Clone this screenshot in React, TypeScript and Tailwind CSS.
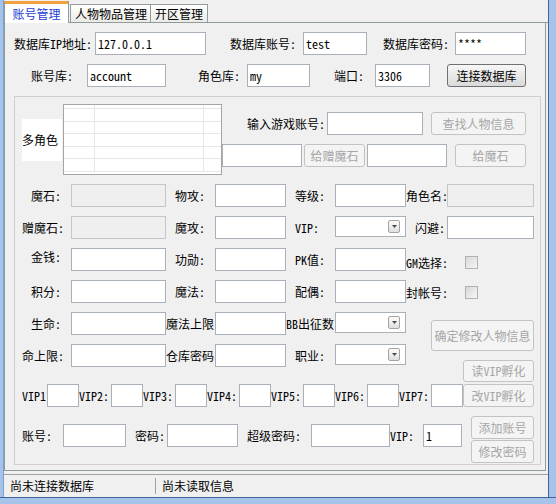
import React from 'react';

type FieldProps = { w: string; value?: string; gray?: boolean; className?: string };

// plain textbox, gray when disabled
const Field: React.FC<FieldProps> = ({ w, value = '', gray = false, className = '' }) => (
  <div
    className={`${w} h-[23px] shrink-0 flex items-center px-[2px] border ${
      gray ? 'border-[#c6c6c6] bg-[#efefef]' : 'border-[#a9b0b8] bg-white'
    } ${className}`}
  >
    {value}
  </div>
);

type LabelProps = { w: string; className?: string; children: React.ReactNode };

const Label: React.FC<LabelProps> = ({ w, className = '', children }) => (
  <div className={`${w} h-[23px] shrink-0 flex items-center whitespace-nowrap ${className}`}>{children}</div>
);

type BtnProps = { w: string; h?: string; disabled?: boolean; className?: string; children: React.ReactNode };

const Btn: React.FC<BtnProps> = ({ w, h = 'h-[23px]', disabled = true, className = '', children }) => (
  <div
    className={`${w} ${h} shrink-0 flex items-center justify-center rounded-[3px] border whitespace-nowrap ${
      disabled
        ? 'border-[#c3c3c3] bg-[#f4f4f4] text-[#a6a6a6]'
        : 'border-[#707070] bg-linear-to-b from-[#f7f7f7] to-[#dadada] text-black'
    } ${className}`}
  >
    {children}
  </div>
);

const Select: React.FC<{ w: string }> = ({ w }) => (
  <div className={`${w} h-[21px] self-start flex items-center justify-end pr-[5px] border border-[#a9b0b8] bg-white`}>
    <div className="w-[12px] h-[13px] rounded-[2px] border border-[#a3a3a3] bg-linear-to-b from-[#fbfbfb] to-[#dfdfdf] flex items-center justify-center">
      <svg width="5" height="3" viewBox="0 0 5 3">
        <path d="M0 0h5L2.5 3z" fill="#4d4d4d" />
      </svg>
    </div>
  </div>
);

const Check = () => (
  <div className="w-[13px] h-[13px] shrink-0 border border-[#b1b1b1] bg-linear-to-br from-[#d8d8d8] to-[#f6f6f6]" />
);

const App: React.FC = () => {
  const vipRow = ['VIP2:', 'VIP3:', 'VIP4:', 'VIP5:', 'VIP6:', 'VIP7:'];

  return (
    <div className="w-[556px] h-[504px] flex flex-col bg-[#f0f0f0] text-[12px] leading-none text-black font-['Noto_Sans_Mono_CJK_SC','Noto_Sans_CJK_SC',sans-serif] overflow-hidden">
      <div className="flex flex-1 min-h-0">
        {/* left window frame */}
        <div className="w-[4px] bg-[#a6c4ea] border-r border-[#7d9fcf]" />

        <div className="flex-1 flex flex-col min-w-0">
          {/* tab strip */}
          <div className="h-[23px] flex items-end">
            <div className="w-[65px] h-[22px] flex flex-col bg-white border-l border-r border-[#919b9c]">
              <div className="h-[3px] bg-[#f0a33c]" />
              <div className="flex-1 flex items-center justify-center text-[#1c3ed3]">账号管理</div>
            </div>
            <div className="w-[1px] h-full border-b border-[#919b9c]" />
            <div className="w-[81px] h-[19px] flex items-center pl-[4px] border border-[#919b9c] bg-linear-to-b from-white to-[#ebebe6]">
              人物物品管理
            </div>
            <div className="w-[57px] h-[19px] flex items-center justify-center border border-l-0 border-[#919b9c] bg-linear-to-b from-white to-[#ebebe6]">
              开区管理
            </div>
            <div className="flex-1 h-full border-b border-[#919b9c]" />
          </div>

          {/* tab page */}
          <div className="h-[448px] mr-[2px] border border-t-0 border-[#919b9c] bg-[#f0f0f0] flex flex-col">
            {/* connection row 1 */}
            <div className="flex mt-[9px]">
              <Label w="w-[81px]" className="ml-[9px]">数据库IP地址:</Label>
              <Field w="w-[111px]" value="127.0.0.1" />
              <Label w="w-[73px]" className="ml-[24px]">数据库账号:</Label>
              <Field w="w-[64px]" value="test" />
              <Label w="w-[72px]" className="ml-[16px]">数据库密码:</Label>
              <Field w="w-[71px]" value="****" />
            </div>

            {/* connection row 2 */}
            <div className="flex mt-[9px]">
              <Label w="w-[56px]" className="ml-[26px]">账号库:</Label>
              <Field w="w-[79px]" value="account" />
              <Label w="w-[49px]" className="ml-[32px]">角色库:</Label>
              <Field w="w-[63px]" value="my" />
              <Label w="w-[41px]" className="ml-[24px]">端口:</Label>
              <Field w="w-[55px]" value="3306" />
              <Btn w="w-[79px]" disabled={false} className="ml-[17px]">连接数据库</Btn>
            </div>

            {/* group box */}
            <div className="mt-[9px] ml-[9px] w-[527px] h-[369px] border border-[#cfcfcf] flex flex-col">
              {/* role list + search */}
              <div className="flex mt-[7px] items-start">
                <div className="ml-[7px] mt-[15px] w-[40px] h-[42px] bg-white flex items-center">多角色</div>
                <div className="ml-[1px] w-[159px] h-[71px] border border-[#a5a5a5] bg-white flex flex-col overflow-hidden">
                  <div className="h-[4px] shrink-0 grid grid-cols-[31px_109px_1fr] border-b border-[#e6e6e6]">
                    <div className="border-r border-[#e6e6e6]" />
                    <div className="border-r border-[#e6e6e6]" />
                    <div />
                  </div>
                  {[0, 1, 2, 3, 4].map((r) => (
                    <div key={r} className="h-[12.5px] shrink-0 grid grid-cols-[31px_109px_1fr] border-b border-[#e6e6e6]">
                      <div className="border-r border-[#e6e6e6]" />
                      <div className="border-r border-[#e6e6e6]" />
                      <div />
                    </div>
                  ))}
                </div>
                <div className="flex flex-col">
                  <div className="flex mt-[8px]">
                    <Label w="w-[80px]" className="ml-[25px]">输入游戏账号:</Label>
                    <Field w="w-[96px]" />
                    <Btn w="w-[95px]" className="ml-[8px]">查找人物信息</Btn>
                  </div>
                  <div className="flex mt-[9px]">
                    <Field w="w-[80px]" />
                    <Btn w="w-[61px]" className="ml-[2px]">给赠魔石</Btn>
                    <Field w="w-[80px]" className="ml-[2px]" />
                    <Btn w="w-[71px]" className="ml-[8px]">给魔石</Btn>
                  </div>
                </div>
              </div>

              {/* character stats */}
              <div className="flex items-start mt-[9px]">
                <div className="grid grid-cols-[56px_95px_49px_71px_49px_71px] gap-y-[9px]">
                  <Label w="w-[56px]" className="pl-[16px]">魔石:</Label>
                  <Field w="w-[95px]" gray />
                  <Label w="w-[49px]" className="pl-[9px]">物攻:</Label>
                  <Field w="w-[71px]" />
                  <Label w="w-[49px]" className="pl-[9px]">等级:</Label>
                  <Field w="w-[71px]" />

                  <Label w="w-[56px]" className="pl-[7px]">赠魔石:</Label>
                  <Field w="w-[95px]" gray />
                  <Label w="w-[49px]" className="pl-[9px]">魔攻:</Label>
                  <Field w="w-[71px]" />
                  <Label w="w-[49px]" className="pl-[9px]">VIP:</Label>
                  <Select w="w-[71px]" />

                  <Label w="w-[56px]" className="pl-[16px] pb-[5px]">金钱:</Label>
                  <Field w="w-[95px]" />
                  <Label w="w-[49px]" className="pl-[9px]">功勋:</Label>
                  <Field w="w-[71px]" />
                  <Label w="w-[49px]" className="pl-[9px]">PK值:</Label>
                  <Field w="w-[71px]" />

                  <Label w="w-[56px]" className="pl-[16px]">积分:</Label>
                  <Field w="w-[95px]" />
                  <Label w="w-[49px]" className="pl-[9px]">魔法:</Label>
                  <Field w="w-[71px]" />
                  <Label w="w-[49px]" className="pl-[9px]">配偶:</Label>
                  <Field w="w-[71px]" />

                  <Label w="w-[56px]" className="pl-[16px]">生命:</Label>
                  <Field w="w-[95px]" />
                  <Label w="w-[49px]">魔法上限</Label>
                  <Field w="w-[71px]" />
                  <Label w="w-[49px]">BB出征数</Label>
                  <Select w="w-[71px]" />

                  <Label w="w-[56px]" className="pl-[7px]">命上限:</Label>
                  <Field w="w-[95px]" />
                  <Label w="w-[49px]">仓库密码</Label>
                  <Field w="w-[71px]" />
                  <Label w="w-[49px]" className="pl-[9px]">职业:</Label>
                  <Select w="w-[71px]" />
                </div>

                <div className="w-[128px] flex flex-col">
                  <div className="flex">
                    <Label w="w-[41px]">角色名:</Label>
                    <Field w="w-[87px]" gray />
                  </div>
                  <div className="flex mt-[9px]">
                    <Label w="w-[41px]" className="pl-[9px]">闪避:</Label>
                    <Field w="w-[87px]" />
                  </div>
                  <div className="flex mt-[9px] h-[23px] items-end pb-[2px]">
                    <div className="w-[59px] whitespace-nowrap">GM选择:</div>
                    <Check />
                  </div>
                  <div className="flex mt-[9px] h-[23px] items-center pt-[2px]">
                    <div className="w-[59px] whitespace-nowrap">封帐号:</div>
                    <Check />
                  </div>
                  <Btn w="w-[103px]" h="h-[31px]" className="ml-[25px] mt-[17px]">确定修改人物信息</Btn>
                  <Btn w="w-[71px]" h="h-[22px]" className="ml-[57px] mt-[9px]">读VIP孵化</Btn>
                </div>
              </div>

              {/* vip incubation row */}
              <div className="flex mt-[2px]">
                <Label w="w-[25px]" className="ml-[7px]">VIP1</Label>
                <Field w="w-[32px]" />
                {vipRow.map((v) => (
                  <React.Fragment key={v}>
                    <Label w="w-[32px]">{v}</Label>
                    <Field w="w-[32px]" />
                  </React.Fragment>
                ))}
                <Btn w="w-[71px]">改VIP孵化</Btn>
              </div>

              {/* account row */}
              <div className="flex items-start mt-[9px]">
                <div className="flex mt-[8px]">
                  <Label w="w-[41px]" className="ml-[7px]">账号:</Label>
                  <Field w="w-[63px]" />
                  <Label w="w-[41px]" className="pl-[9px]">密码:</Label>
                  <Field w="w-[71px]" />
                  <Label w="w-[73px]" className="pl-[9px]">超级密码:</Label>
                  <Field w="w-[79px]" />
                  <Label w="w-[33px]">VIP:</Label>
                  <Field w="w-[39px]" value="1" />
                </div>
                <div className="flex flex-col ml-[9px]">
                  <Btn w="w-[63px]">添加账号</Btn>
                  <Btn w="w-[63px]" className="mt-[1px]">修改密码</Btn>
                </div>
              </div>
            </div>
          </div>

          {/* status bar */}
          <div className="flex-1 mt-[3px] border-t border-[#a0a0a0] flex items-center">
            <div className="w-[151px] pl-[6px] whitespace-nowrap">尚未连接数据库</div>
            <div className="w-[1px] h-[16px] bg-[#a0a0a0]" />
            <div className="pl-[6px] whitespace-nowrap">尚未读取信息</div>
          </div>
        </div>

        {/* right window frame */}
        <div className="w-[8px] bg-[#a6c4ea] border-l border-[#3d649e]" />
      </div>
      {/* bottom window frame */}
      <div className="h-[7px] bg-[#a6c4ea] border-t border-[#3d649e]" />
    </div>
  );
};

export default App;
